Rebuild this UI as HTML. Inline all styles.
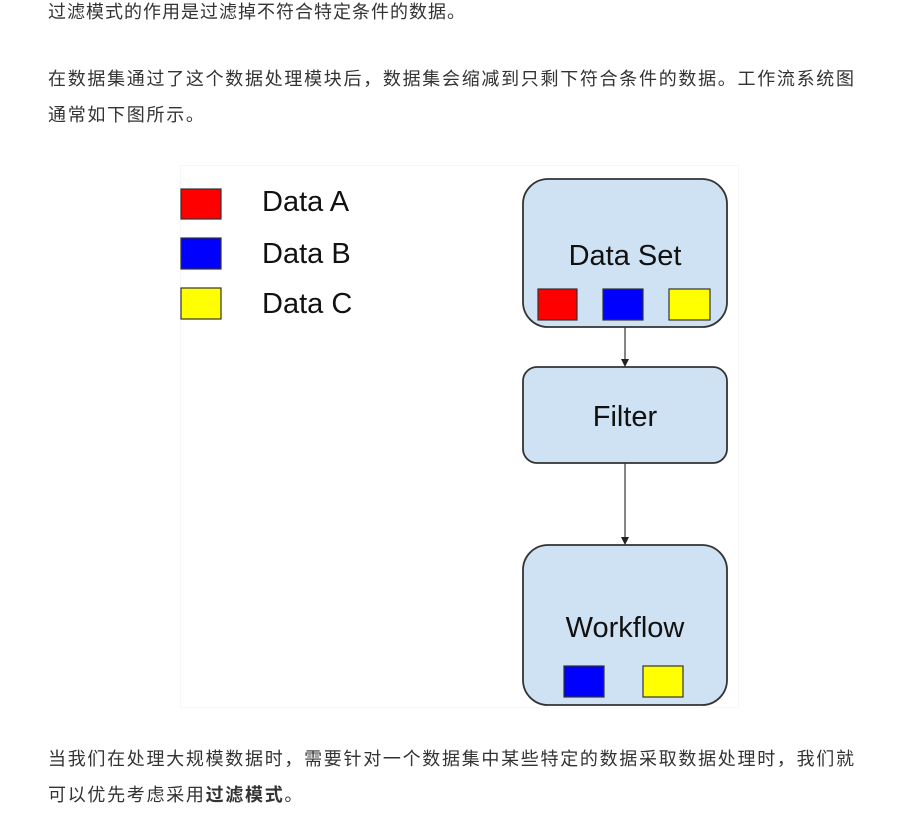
<!DOCTYPE html>
<html><head><meta charset="utf-8"><style>
body{margin:0;width:915px;height:819px;background:#fff;position:relative;overflow:hidden;font-family:"Liberation Sans","Noto Sans CJK SC",sans-serif;color:#333;}
.l{position:absolute;left:48px;font-size:18px;white-space:nowrap;line-height:24px;letter-spacing:1px;}
.w{letter-spacing:1.7px}
svg{position:absolute;left:0;top:0}
</style></head><body>
<div class="l" style="top:0px">过滤模式的作用是过滤掉不符合特定条件的数据。</div>
<div class="l w" style="top:67px">在数据集通过了这个数据处理模块后，数据集会缩减到只剩下符合条件的数据。工作流系统图</div>
<div class="l w" style="top:103px">通常如下图所示。</div>
<div class="l w" style="top:747px">当我们在处理大规模数据时，需要针对一个数据集中某些特定的数据采取数据处理时，我们就</div>
<div class="l w" style="top:783px">可以优先考虑采用<b>过滤模式</b>。</div>
<svg width="915" height="819" font-family="Liberation Sans, sans-serif">
<rect x="180.5" y="165.5" width="558" height="542" fill="#fff" stroke="#f7f7f7"/>
<g stroke="#333" stroke-width="1.2">
<rect x="181" y="189" width="40" height="30" fill="#f00"/>
<rect x="181" y="238" width="40" height="31" fill="#00f"/>
<rect x="181" y="288" width="40" height="31" fill="#ff0"/>
<rect x="523" y="179" width="204" height="148" rx="25" fill="#cfe2f3" stroke-width="1.8"/>
<rect x="523" y="367" width="204" height="96" rx="14" fill="#cfe2f3" stroke-width="1.8"/>
<rect x="523" y="545" width="204" height="160" rx="25" fill="#cfe2f3" stroke-width="1.8"/>
<rect x="538" y="289" width="39" height="31" fill="#f00"/>
<rect x="603" y="289" width="40" height="31" fill="#00f"/>
<rect x="669" y="289" width="41" height="31" fill="#ff0"/>
<rect x="564" y="666" width="40" height="31" fill="#00f"/>
<rect x="643" y="666" width="40" height="31" fill="#ff0"/>
<line x1="625" y1="327" x2="625" y2="360"/>
<line x1="625" y1="463" x2="625" y2="538"/>
</g>
<path d="M621 359 L629 359 L625 367Z M621 537 L629 537 L625 545Z" fill="#222"/>
<g font-size="29" fill="#111">
<text x="262" y="211">Data A</text>
<text x="262" y="263">Data B</text>
<text x="262" y="313">Data C</text>
<text x="625" y="265" text-anchor="middle">Data Set</text>
<text x="625" y="426" text-anchor="middle">Filter</text>
<text x="625" y="637" text-anchor="middle">Workflow</text>
</g>
</svg>
</body></html>
